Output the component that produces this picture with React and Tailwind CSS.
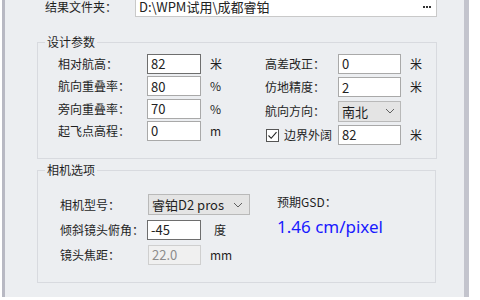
import React from 'react';

const cjk = { fontFamily: '"Noto Sans CJK SC", "Noto Sans", sans-serif' };

const Chevron = () => (
  <svg width="10" height="6" viewBox="0 0 10 6" className="text-[#606060]">
    <polyline points="1,1 5,5 9,1" fill="none" stroke="currentColor" strokeWidth="1" />
  </svg>
);

const TextBox = ({ value, width = 'w-[54px]', dark = false, disabled = false }) => (
  <div
    className={`${width} h-[20px] flex items-center pl-[3px] text-[13px] border ${
      disabled
        ? 'bg-[#f0f0f0] border-[#cfcfcf] text-[#8c8c8c]'
        : dark
        ? 'bg-white border-[#6e6e6e] text-[#222]'
        : 'bg-white border-[#a9a9a9] text-[#222]'
    }`}
  >
    {value}
  </div>
);

const Row = ({ label, labelW, children, unit }) => (
  <div className="flex items-center h-[20px]">
    <span className={`${labelW} shrink-0`}>{label}</span>
    {children}
    {unit && <span className="ml-[9px]">{unit}</span>}
  </div>
);

export default function App() {
  return (
    <div className="w-[480px] h-[300px] bg-white overflow-hidden text-[12px] text-[#1f1f1f]" style={cjk}>
      <div className="ml-[2px] w-[467px] h-[300px] bg-[#eceef1] border-l-[3px] border-l-[#b8b9c3] border-r-[5px] border-r-[#c3c4cd]">
        {/* 结果文件夹 */}
        <div className="flex items-center mt-[-3px] h-[20px]">
          <span className="ml-[40px] w-[90px]">结果文件夹：</span>
          <div className="w-[302px] h-[20px] bg-white border border-[#c9c9c9] flex items-center justify-between pl-[3px] pr-[4px]">
            <span className="text-[13px] text-[#222]">D:\WPM试用\成都睿铂</span>
            <span className="flex gap-[1px] mr-[1px]">
              <span className="w-[2px] h-[2px] bg-[#333]" />
              <span className="w-[2px] h-[2px] bg-[#333]" />
              <span className="w-[2px] h-[2px] bg-[#333]" />
            </span>
          </div>
        </div>

        {/* 设计参数 */}
        <fieldset className="ml-[32px] mt-[17px] w-[400px] h-[125px] border border-[#d8dadf] pt-[4px]">
          <legend className="ml-[7px] px-[2px] leading-[16px]">设计参数</legend>
          <div className="flex">
            <div className="ml-[20px] w-[207px] flex flex-col gap-[2.3px]">
              <Row label="相对航高：" labelW="w-[89px]" unit="米">
                <TextBox value="82" dark />
              </Row>
              <Row label="航向重叠率：" labelW="w-[89px]" unit="%">
                <TextBox value="80" />
              </Row>
              <Row label="旁向重叠率：" labelW="w-[89px]" unit="%">
                <TextBox value="70" />
              </Row>
              <Row label="起飞点高程：" labelW="w-[89px]" unit="m">
                <TextBox value="0" />
              </Row>
            </div>
            <div className="flex flex-col gap-[3.4px]">
              <Row label="高差改正：" labelW="w-[73px]" unit="米">
                <TextBox value="0" width="w-[63px]" />
              </Row>
              <Row label="仿地精度：" labelW="w-[73px]" unit="米">
                <TextBox value="2" width="w-[63px]" />
              </Row>
              <div className="flex items-center h-[21px]">
                <span className="w-[73px]">航向方向：</span>
                <div className="w-[63px] h-[21px] bg-[#e4e4e4] border border-[#b9b9b9] flex items-center justify-between pl-[3px] pr-[5px] text-[13px]">
                  <span>南北</span>
                  <Chevron />
                </div>
              </div>
              <div className="flex items-center h-[20px]">
                <div className="w-[73px] flex items-center">
                  <span className="ml-[1px] w-[13px] h-[13px] border border-[#555] bg-white flex items-center justify-center">
                    <svg width="11" height="11" viewBox="0 0 11 11">
                      <polyline points="1.5,5.5 4.2,8.3 9.5,2.2" fill="none" stroke="#222" strokeWidth="1.1" />
                    </svg>
                  </span>
                  <span className="ml-[5px]">边界外阔</span>
                </div>
                <TextBox value="82" width="w-[63px]" />
                <span className="ml-[9px]">米</span>
              </div>
            </div>
          </div>
        </fieldset>

        {/* 相机选项 */}
        <fieldset className="ml-[32px] mt-[3px] w-[399px] h-[121px] border border-[#d8dadf] pt-[16px]">
          <legend className="ml-[7px] px-[2px] leading-[16px]">相机选项</legend>
          <div className="flex">
            <div className="ml-[22px] w-[217px] flex flex-col gap-[5px]">
              <div className="flex items-center h-[21px]">
                <span className="w-[88px]">相机型号：</span>
                <div className="w-[102px] h-[21px] bg-[#e4e4e4] border border-[#b9b9b9] flex items-center justify-between pl-[3px] pr-[6px] text-[13px]">
                  <span>睿铂D2 pros</span>
                  <Chevron />
                </div>
              </div>
              <Row label="倾斜镜头俯角：" labelW="w-[87px]" unit={<span className="ml-[4px]">度</span>}>
                <TextBox value="-45" dark />
              </Row>
              <Row label="镜头焦距：" labelW="w-[88px]" unit="mm">
                <TextBox value="22.0" width="w-[53px]" disabled />
              </Row>
            </div>
            <div className="flex flex-col mt-[-1px]">
              <span>预期GSD：</span>
              <span
                className="mt-[4px] text-[17px] text-[#1a1aff] leading-[24px]"
                style={{ fontFamily: '"Noto Sans", sans-serif' }}
              >
                1.46 cm/pixel
              </span>
            </div>
          </div>
        </fieldset>
      </div>
    </div>
  );
}
